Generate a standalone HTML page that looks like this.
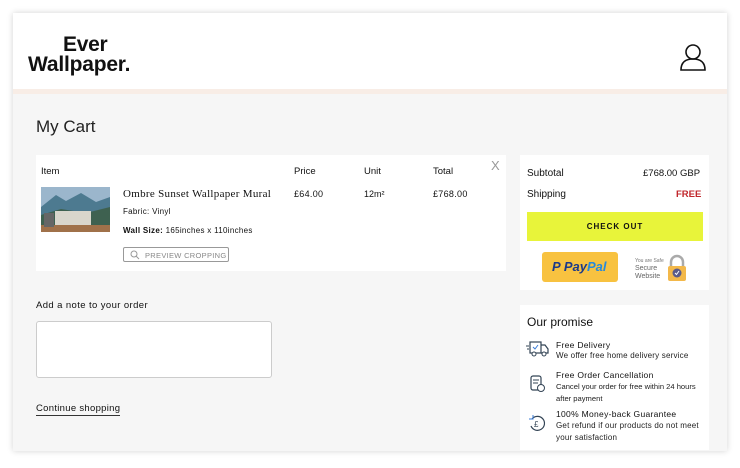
<!DOCTYPE html>
<html><head><meta charset="utf-8"><style>
*{margin:0;padding:0;box-sizing:border-box}
body{width:740px;height:468px;background:#fff;font-family:"Liberation Sans",sans-serif;color:#111;position:relative;overflow:hidden}
.a{position:absolute;white-space:nowrap}
.card{left:13px;top:13px;width:714px;height:438px;background:#f6f6f6;box-shadow:0 0 6px rgba(0,0,0,.18)}
.hdr{left:13px;top:13px;width:714px;height:76px;background:#fff}
.stripe{left:13px;top:89px;width:714px;height:5px;background:#f8ede6}
.box{background:#fff}
.s{font-size:8px;letter-spacing:.2px;color:#222}
</style></head><body>
<div class="a card"></div>
<div class="a hdr"></div>
<div class="a stripe"></div>
<div class="a" style="left:63px;top:34px;font-weight:bold;font-size:21px;line-height:22px;letter-spacing:-.3px">Ever</div>
<div class="a" style="left:28px;top:54px;font-weight:bold;font-size:21px;line-height:22px;letter-spacing:-.2px">Wallpaper.</div>
<svg class="a" style="left:679px;top:43px" width="28" height="29" viewBox="0 0 28 29"><circle cx="14" cy="9" r="7" fill="none" stroke="#111" stroke-width="1.6"/><path d="M2 27 Q2 16 14 16 Q26 16 26 27 Z" fill="none" stroke="#111" stroke-width="1.6"/></svg>
<div class="a" style="left:36px;top:117px;font-size:17px;color:#222">My Cart</div>

<div class="a box" style="left:36px;top:155px;width:470px;height:116px"></div>
<div class="a" style="left:41px;top:166px;font-size:9.5px">Item</div>
<div class="a" style="left:294px;top:166px;font-size:9.5px">Price</div>
<div class="a" style="left:364px;top:166px;font-size:9.5px">Unit</div>
<div class="a" style="left:433px;top:166px;font-size:9.5px">Total</div>
<div class="a" style="left:491px;top:158px;font-size:13px;color:#999">X</div>
<svg class="a" style="left:41px;top:187px" width="69" height="45"><rect width="69" height="45" fill="#9bb6cc"/><path d="M0 20 L15 8 L25 14 L40 6 L55 15 L69 10 L69 45 L0 45Z" fill="#4d7a90"/><path d="M0 28 L20 22 L45 26 L69 20 L69 45 L0 45Z" fill="#3e6150"/><rect x="14" y="24" width="36" height="14" fill="#d9d6cc"/><rect x="0" y="38" width="69" height="7" fill="#a0714a"/><rect x="3" y="26" width="10" height="14" fill="#666"/></svg>
<div class="a" style="left:123px;top:188px;font-family:'Liberation Serif',serif;font-size:11px;letter-spacing:.3px">Ombre Sunset Wallpaper Mural</div>
<div class="a" style="left:123px;top:207px;font-size:8px;letter-spacing:.3px">Fabric: Vinyl</div>
<div class="a" style="left:123px;top:226px;font-size:8px;letter-spacing:.3px"><b>Wall Size:</b> 165inches x 110inches</div>
<div class="a" style="left:123px;top:247px;width:106px;height:15px;border:1px solid #999;border-radius:2px;font-size:7.5px;color:#888;letter-spacing:.3px;padding:3px 0 0 21px">PREVIEW CROPPING</div>
<svg class="a" style="left:130px;top:250px" width="10" height="10"><circle cx="4" cy="4" r="3" fill="none" stroke="#999"/><path d="M6 6 L9 9" stroke="#999"/></svg>
<div class="a" style="left:294px;top:189px;font-size:9px;letter-spacing:.3px">£64.00</div>
<div class="a" style="left:364px;top:189px;font-size:9px">12m²</div>
<div class="a" style="left:433px;top:189px;font-size:9px;letter-spacing:.3px">£768.00</div>

<div class="a" style="left:36px;top:300px;font-size:9.5px;letter-spacing:.4px">Add a note to your order</div>
<div class="a" style="left:36px;top:321px;width:236px;height:57px;background:#fff;border:1px solid #ccc;border-radius:3px"></div>
<div class="a" style="left:36px;top:403px;font-size:9.5px;letter-spacing:.3px;border-bottom:1px solid #333;padding-bottom:1px">Continue shopping</div>

<div class="a box" style="left:520px;top:155px;width:189px;height:135px"></div>
<div class="a" style="left:527px;top:168px;font-size:10px">Subtotal</div>
<div class="a" style="left:643px;top:168px;font-size:9.5px">£768.00 GBP</div>
<div class="a" style="left:527px;top:189px;font-size:10px">Shipping</div>
<div class="a" style="left:676px;top:189px;font-size:9.5px;font-weight:bold;color:#c0262b">FREE</div>
<div class="a" style="left:527px;top:212px;width:176px;height:29px;background:#e8f43a;font-size:8px;font-weight:bold;letter-spacing:1px;text-align:center;line-height:29px">CHECK OUT</div>
<div class="a" style="left:542px;top:252px;width:76px;height:30px;background:#f8c240;border-radius:3px;font-size:13px;font-weight:bold;font-style:italic;line-height:30px;padding-left:10px"><span style="color:#1c3a8a">P </span><span style="color:#1c3a8a">Pay</span><span style="color:#2a8ad8">Pal</span></div>
<div class="a" style="left:635px;top:258px;font-size:5px;color:#777">You are Safe</div>
<div class="a" style="left:635px;top:265px;font-size:7px;color:#666;line-height:8px">Secure<br>Website</div>
<svg class="a" style="left:666px;top:254px" width="22" height="28"><path d="M5 12 V8 A6 6 0 0 1 17 8 V12" fill="none" stroke="#aaa" stroke-width="2.5"/><rect x="2" y="12" width="18" height="15" rx="2" fill="#f3b84a"/><circle cx="11" cy="19" r="4.5" fill="#5a5a8a"/><path d="M9 19 l1.5 1.5 L13 17" stroke="#fff" fill="none"/></svg>

<div class="a box" style="left:520px;top:305px;width:189px;height:145px"></div>
<div class="a" style="left:527px;top:315px;font-size:12px">Our promise</div>
<svg class="a" style="left:526px;top:340px" width="24" height="18" viewBox="0 0 24 18"><rect x="4" y="2" width="11" height="11" fill="none" stroke="#345" stroke-width="1.2"/><path d="M15 5 H19 L22 9 V13 H15" fill="none" stroke="#345" stroke-width="1.2"/><circle cx="8" cy="14" r="2" fill="#fff" stroke="#345"/><circle cx="18" cy="14" r="2" fill="#fff" stroke="#345"/><path d="M0 6 H3 M1 9 H3" stroke="#345"/><path d="M7 7 l2 2 l3-4" stroke="#3a7bd5" fill="none"/></svg>
<svg class="a" style="left:530px;top:375px" width="16" height="18"><rect x="1" y="1" width="10" height="14" rx="2" fill="none" stroke="#345" stroke-width="1.2"/><path d="M3 5 H9 M3 8 H8" stroke="#345"/><circle cx="11" cy="13" r="3.5" fill="#fff" stroke="#345"/></svg>
<svg class="a" style="left:528px;top:414px" width="18" height="18"><path d="M4 5 A7 7 0 1 1 3 12" fill="none" stroke="#345" stroke-width="1.2"/><path d="M1 5 H5 V1" fill="none" stroke="#3a7bd5"/><text x="6" y="13" font-size="8" font-family="Liberation Sans" fill="#345">£</text></svg>
<div class="a" style="left:556px;top:340px;font-size:8.5px;letter-spacing:.3px">Free Delivery</div>
<div class="a s" style="left:556px;top:351px">We offer free home delivery service</div>
<div class="a" style="left:556px;top:370px;font-size:8.5px;letter-spacing:.3px">Free Order Cancellation</div>
<div class="a s" style="left:556px;top:381px;line-height:12px;font-size:7.6px;letter-spacing:0">Cancel your order for free within 24 hours<br>after payment</div>
<div class="a" style="left:556px;top:409px;font-size:8.5px;letter-spacing:.3px">100% Money-back Guarantee</div>
<div class="a s" style="left:556px;top:420px;line-height:12px">Get refund if our products do not meet<br>your satisfaction</div>
</body></html>
